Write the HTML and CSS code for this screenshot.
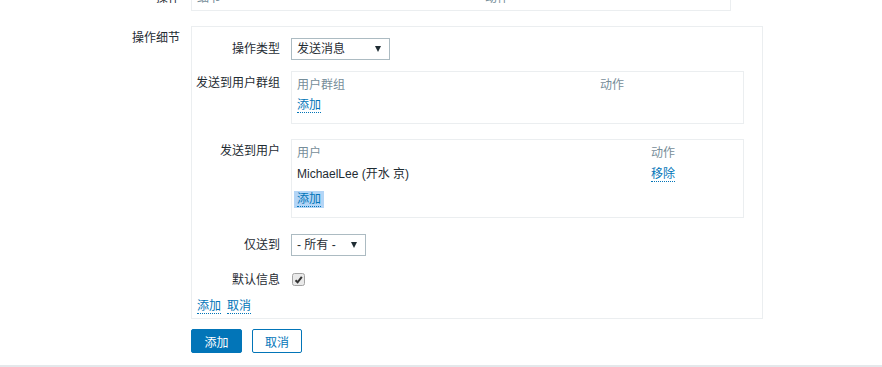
FILE: index.html
```html
<!DOCTYPE html>
<html lang="zh-CN">
<head>
  <meta charset="UTF-8" />
  <meta name="viewport" content="width=device-width, initial-scale=1.0" />
  <title>操作细节</title>
  <link rel="stylesheet" href="styles.css">
</head>
<body>

  <div class="page">

    <div class="form-row top-row">
      <div class="form-label top-label">操作</div>
      <div class="top-box">
        <table class="list">
          <tr><th class="col-detail">细节</th><th>动作</th></tr>
        </table>
      </div>
    </div>

    <div class="form-row main-row">
      <div class="form-label">操作细节</div>
      <div class="detail-box">

        <div class="field">
          <label class="field-label">操作类型</label>
          <div class="select select-type"><span>发送消息</span><i class="arrow"></i></div>
        </div>

        <div class="field field-top row-groups">
          <label class="field-label">发送到用户群组</label>
          <div class="list-box">
            <table class="list">
              <tr><th class="col-group">用户群组</th><th>动作</th></tr>
            </table>
            <a class="link" href="#">添加</a>
          </div>
        </div>

        <div class="field field-top row-users">
          <label class="field-label">发送到用户</label>
          <div class="list-box">
            <table class="list">
              <tr><th class="col-user">用户</th><th>动作</th></tr>
              <tr><td>MichaelLee (开水 京)</td><td><a class="link" href="#">移除</a></td></tr>
            </table>
            <a class="link focused" href="#">添加</a>
          </div>
        </div>

        <div class="field row-only">
          <label class="field-label">仅送到</label>
          <div class="select select-only"><span>- 所有 -</span><i class="arrow"></i></div>
        </div>

        <div class="field row-default">
          <label class="field-label">默认信息</label>
          <span class="checkbox">
            <svg width="13" height="13" viewBox="0 0 13 13">
              <rect x="0.5" y="0.5" width="12" height="12" rx="2" fill="#e9e9e9" stroke="#a3a3a3"/>
              <path d="M3.5 7.2 L5.6 9.3 L9.8 3.8" fill="none" stroke="#333" stroke-width="2"/>
            </svg>
          </span>
        </div>

        <div class="box-links">
          <a class="link" href="#">添加</a>
          <a class="link" href="#">取消</a>
        </div>

      </div>
    </div>

    <div class="buttons">
      <button class="btn btn-primary">添加</button>
      <button class="btn btn-alt">取消</button>
    </div>

  </div>

</body>
</html>
```

FILE: styles.css
```css
body {
  margin: 0;
  background: #e4e8eb;
  font-family: "Liberation Sans", "Noto Sans CJK SC", sans-serif;
  font-size: 12px;
  line-height: 14px;
  color: #1f2c33;
}

.page {
  height: 365px;
  overflow: hidden;
  background: #fff;
}

a {
  color: #0275b8;
  text-decoration: none;
}

.link {
  border-bottom: 1px dotted #0275b8;
}

.link.focused {
  background: #b3d5f6;
  box-shadow: 0 0 0 1px #b3d5f6, -2px 0 0 1px #b3d5f6, 2px 0 0 1px #b3d5f6;
}

/* form rows */
.form-row {
  display: flex;
  align-items: flex-start;
}

.form-label {
  width: 180px;
  margin-right: 11px;
  text-align: right;
  padding-top: 5px;
}

.top-row {
  margin-top: -16px;
}

.top-label {
  padding-top: 7px;
}

.main-row {
  margin-top: 15px;
}

.top-box {
  width: 540px;
  box-sizing: border-box;
  border: 1px solid #ebeef0;
  padding: 6px 5px 5px;
}

.detail-box {
  width: 572px;
  box-sizing: border-box;
  border: 1px solid #ebeef0;
  padding: 11px 5px 4px;
}

/* fields inside the box */
.field {
  display: flex;
  align-items: center;
}

.field-top {
  align-items: flex-start;
}

.field-label {
  width: 83px;
  margin-right: 11px;
  text-align: right;
  white-space: nowrap;
  direction: rtl;
  flex-shrink: 0;
}

.field-top .field-label {
  padding-top: 5px;
}

.row-groups { margin-top: 11px; }
.row-users { margin-top: 15px; }
.row-only { margin-top: 16px; }
.row-default { margin-top: 17px; height: 13px; }

.box-links {
  margin-top: 13px;
  display: flex;
  gap: 6px;
}

/* select */
.select {
  height: 22px;
  box-sizing: border-box;
  border: 1px solid #acbbc2;
  padding: 0 8px 0 5px;
  display: flex;
  align-items: center;
  justify-content: space-between;
}

.select-type { width: 99px; }
.select-only { width: 75px; }

.arrow {
  width: 0;
  height: 0;
  border-left: 3.5px solid transparent;
  border-right: 3.5px solid transparent;
  border-top: 6px solid #1f2c33;
}

.checkbox {
  display: flex;
  margin-left: 1px;
}

/* list tables */
.list-box {
  width: 453px;
  box-sizing: border-box;
  border: 1px solid #ebeef0;
  padding: 6px 5px 11px;
}

.list {
  width: 100%;
  border-collapse: collapse;
}

.list th {
  text-align: left;
  font-weight: normal;
  color: #768d99;
  padding: 0 0 6px;
}

.list td {
  padding: 1px 0 11px;
}

.top-box .list th {
  padding-bottom: 0;
}

.col-detail { width: 288px; }
.col-group { width: 303px; }
.col-user { width: 354px; }

/* buttons */
.buttons {
  display: flex;
  gap: 10px;
  margin: 10px 0 0 191px;
}

.btn {
  height: 24px;
  width: 50px;
  padding: 0;
  border: 1px solid #0275b8;
  border-radius: 2px;
  font-family: inherit;
  font-size: 12px;
  cursor: pointer;
}

.btn-primary {
  width: 51px;
  background: #0275b8;
  color: #fff;
}

.btn-alt {
  background: #fff;
  color: #0275b8;
}
```
